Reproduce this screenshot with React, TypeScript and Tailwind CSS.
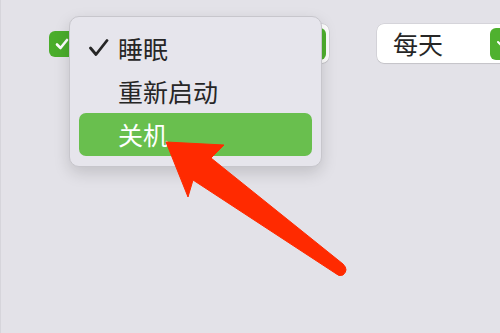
import { ChevronDown } from 'lucide-react';

const font = { fontFamily: '"Noto Sans CJK SC", "Noto Sans", sans-serif' };

function PopupButton({ label, className }: { label?: string; className: string }) {
  return (
    <div className={`flex h-[39px] items-center justify-between rounded-[7px] bg-white pl-4 pr-[3px] shadow-[0_0_0_0.5px_rgba(0,0,0,0.12),0_1px_1px_rgba(0,0,0,0.08)] ${className}`}>
      <span className="text-[25px] leading-none text-[#262626]">{label}</span>
      <div className="flex h-[32px] w-[24px] items-center justify-center rounded-[6px] bg-[#4fb12f]">
        <ChevronDown className="h-4 w-4 text-white" strokeWidth={3} />
      </div>
    </div>
  );
}

export default function App() {
  return (
    <div
      className="relative h-[333px] w-[500px] overflow-hidden border-l border-[#d6d5db] bg-[#e3e2e8]"
      style={font}
    >
      {/* Settings row behind the menu */}
      <div className="flex items-center gap-[48px] pl-[48px] pt-[24px]">
        <div className="flex items-center gap-[9px]">
          <div className="flex h-[26px] w-[26px] items-center justify-center rounded-[6px] bg-[#4aad2b]">
            <svg width="16" height="16" viewBox="0 0 16 16">
              <polyline points="3,8.5 6.5,12 13,4" fill="none" stroke="white" strokeWidth="2.6" strokeLinecap="round" strokeLinejoin="round" />
            </svg>
          </div>
          {/* popup covered by the open menu */}
          <PopupButton className="w-[245px]" />
        </div>
        <PopupButton label="每天" className="w-[140px] shrink-0" />
      </div>

      {/* Open dropdown menu */}
      <div className="absolute left-[68px] top-[16px] h-[151px] w-[253px] rounded-[10px] border border-[#c7c6cc] bg-[#e6e5ec] px-[9px] pb-[10px] pt-[9px] shadow-[0_6px_16px_rgba(0,0,0,0.15)]">
        <div className="flex h-[44px] items-center rounded-[7px] text-[25px] leading-none text-[#262626]">
          <span className="flex w-[39px] justify-center">
            <svg width="20" height="18" viewBox="0 0 20 18">
              <polyline points="1.5,9 7,15.5 18,1.5" fill="none" stroke="#262626" strokeWidth="2.8" strokeLinecap="round" strokeLinejoin="round" />
            </svg>
          </span>
          <span>睡眠</span>
        </div>
        <div className="flex h-[43px] items-center rounded-[7px] pl-[39px] text-[25px] leading-none text-[#262626]">
          重新启动
        </div>
        <div className="flex h-[43px] items-center rounded-[7px] bg-[#69bf4e] pl-[39px] text-[25px] leading-none text-white">
          关机
        </div>
      </div>

      {/* Red annotation arrow */}
      <svg className="absolute left-0 top-0" width="500" height="333" viewBox="0 0 500 333">
        <path
          d="M165,142 L223,145 L210,158 L342,264 Q348,270 342,275 Q338,277 334,273 L192,180 L187,197 Z"
          fill="#ff2a00"
          stroke="#ff2a00"
          strokeWidth="1"
          strokeLinejoin="round"
        />
      </svg>
    </div>
  );
}
